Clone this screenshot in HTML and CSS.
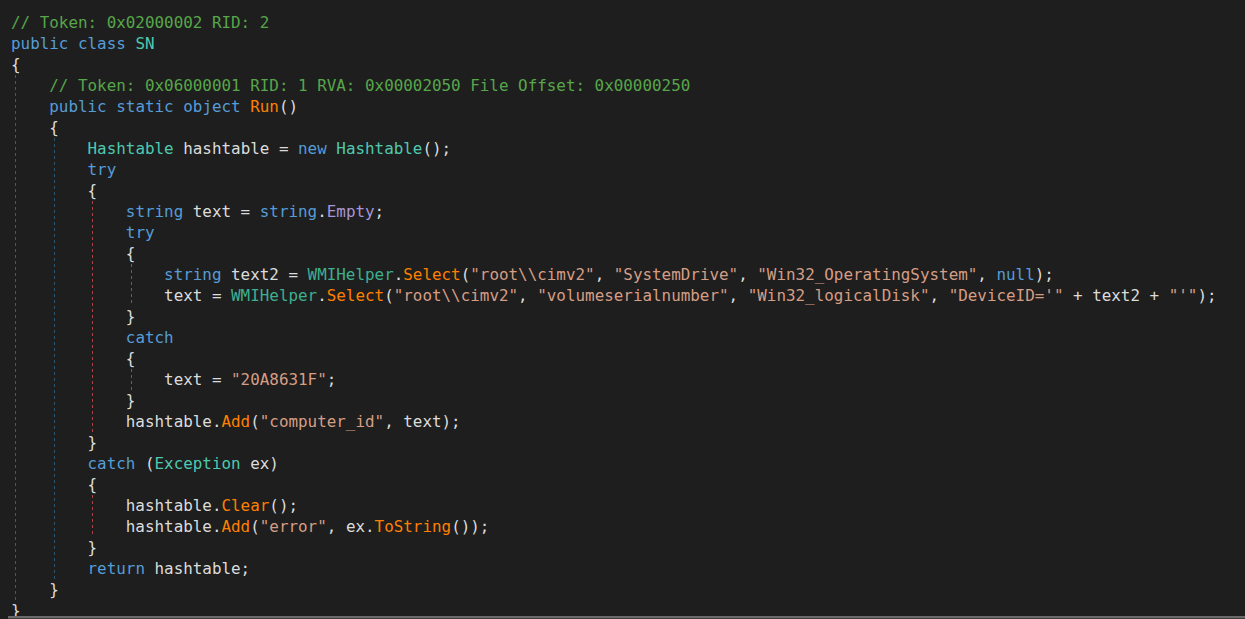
FILE: index.html
```html
<!DOCTYPE html>
<html lang="en">
<head>
<meta charset="utf-8">
<title>SN.cs</title>
<link rel="stylesheet" href="styles.css">
</head>
<body>
<main class="editor">
<div class="code">
<div class="ln"><span class="c">// Token: 0x02000002 RID: 2</span></div>
<div class="ln"><span class="k">public</span> <span class="k">class</span> <span class="t">SN</span></div>
<div class="ln">{</div>
<div class="blk g0">
<div class="ln">    <span class="c">// Token: 0x06000001 RID: 1 RVA: 0x00002050 File Offset: 0x00000250</span></div>
<div class="ln">    <span class="k">public</span> <span class="k">static</span> <span class="k">object</span> <span class="m">Run</span>()</div>
<div class="ln">    {</div>
<div class="blk g1">
<div class="ln">        <span class="t">Hashtable</span> hashtable = <span class="k">new</span> <span class="t">Hashtable</span>();</div>
<div class="ln">        <span class="k">try</span></div>
<div class="ln">        {</div>
<div class="blk g2">
<div class="ln">            <span class="k">string</span> text = <span class="k">string</span>.<span class="p">Empty</span>;</div>
<div class="ln">            <span class="k">try</span></div>
<div class="ln">            {</div>
<div class="blk g3">
<div class="ln">                <span class="k">string</span> text2 = <span class="ts">WMIHelper</span>.<span class="m">Select</span>(<span class="s">"root\\cimv2"</span>, <span class="s">"SystemDrive"</span>, <span class="s">"Win32_OperatingSystem"</span>, <span class="k">null</span>);</div>
<div class="ln">                text = <span class="ts">WMIHelper</span>.<span class="m">Select</span>(<span class="s">"root\\cimv2"</span>, <span class="s">"volumeserialnumber"</span>, <span class="s">"Win32_logicalDisk"</span>, <span class="s">"DeviceID='"</span> + text2 + <span class="s">"'"</span>);</div>
</div>
<div class="ln">            }</div>
<div class="ln">            <span class="k">catch</span></div>
<div class="ln">            {</div>
<div class="blk g3">
<div class="ln">                text = <span class="s">"20A8631F"</span>;</div>
</div>
<div class="ln">            }</div>
<div class="ln">            hashtable.<span class="m">Add</span>(<span class="s">"computer_id"</span>, text);</div>
</div>
<div class="ln">        }</div>
<div class="ln">        <span class="k">catch</span> (<span class="t">Exception</span> ex)</div>
<div class="ln">        {</div>
<div class="blk g2">
<div class="ln">            hashtable.<span class="m">Clear</span>();</div>
<div class="ln">            hashtable.<span class="m">Add</span>(<span class="s">"error"</span>, ex.<span class="m">ToString</span>());</div>
</div>
<div class="ln">        }</div>
<div class="ln">        <span class="k">return</span> hashtable;</div>
</div>
<div class="ln">    }</div>
</div>
<div class="ln">}</div>
</div>
<div class="hscroll"></div>
</main>
</body>
</html>
```
FILE: styles.css
```css
html, body {
  margin: 0;
  padding: 0;
  background: #1e1e1e;
  overflow: hidden;
}

.editor {
  position: relative;
  width: 1245px;
  height: 619px;
  overflow: hidden;
  background: #1e1e1e;
}

.code {
  padding: 12px 0 0 0;
  font-family: "DejaVu Sans Mono", "Liberation Mono", monospace;
  font-size: 15.9px;
  line-height: 21px;
  color: #dcdcdc;
}

.ln {
  white-space: pre;
  padding-left: 11px;
  height: 21px;
}

.blk {
  background-repeat: no-repeat;
  background-size: 1px 100%;
}

.g0 {
  background-image: repeating-linear-gradient(to bottom, #2a6b4c 0 3px, transparent 3px 6px);
  background-position: 15px 0;
}

.g1 {
  background-image: repeating-linear-gradient(to bottom, #2b5575 0 3px, transparent 3px 6px);
  background-position: 54px 0;
}

.g2 {
  background-image: repeating-linear-gradient(to bottom, #a84646 0 3px, transparent 3px 6px);
  background-position: 92px 0;
}

.g3 {
  background-image: repeating-linear-gradient(to bottom, #a84646 0 3px, transparent 3px 6px);
  background-position: 131px 0;
}

.c { color: #57a64a; }
.k { color: #569cd6; }
.t { color: #4ec9b0; }
.ts { color: #3fae90; }
.s { color: #d69d85; }
.m { color: #ff8000; }
.p { color: #a895d6; }

.hscroll {
  position: absolute;
  left: 8px;
  right: 0;
  bottom: 0;
  height: 3px;
  background: #3c3c3c;
  border-top: 2px solid #6a6a6a;
  box-sizing: border-box;
}
```
